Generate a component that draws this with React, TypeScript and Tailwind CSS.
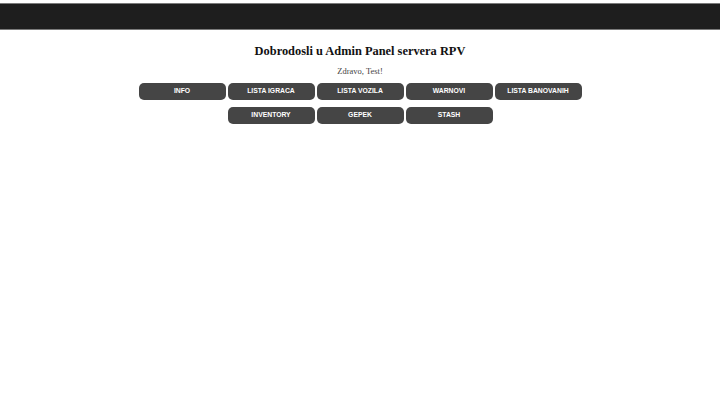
import React from "react";

const buttons = [
  "INFO",
  "LISTA IGRACA",
  "LISTA VOZILA",
  "WARNOVI",
  "LISTA BANOVANIH",
  "INVENTORY",
  "GEPEK",
  "STASH",
];

export default function App() {
  return (
    <div className="min-h-[405px] w-full bg-white pt-[3px]">
      {/* top bar */}
      <div className="h-[27px] w-full border-y border-[#7a7a7a] bg-[#1e1e1e]" />

      <div className="flex flex-col items-center pt-[13px]">
        <h1 className="font-['Liberation_Serif',serif] text-[12.4px] font-bold leading-[16px] text-[#111]">
          Dobrodosli u Admin Panel servera RPV
        </h1>
        <p className="mt-[6px] font-['Liberation_Serif',serif] text-[8.5px] leading-[12px] text-[#444]">
          Zdravo, Test!
        </p>

        <div className="mt-[6px] flex w-[450px] flex-wrap justify-center gap-x-[2px] gap-y-[7px]">
          {buttons.map((b) => (
            <button
              key={b}
              className="flex h-[17px] w-[87px] items-center justify-center rounded-[5px] bg-[#454545] font-['Liberation_Sans',sans-serif] text-[6.8px] font-bold text-white"
            >
              {b}
            </button>
          ))}
        </div>
      </div>
    </div>
  );
}
